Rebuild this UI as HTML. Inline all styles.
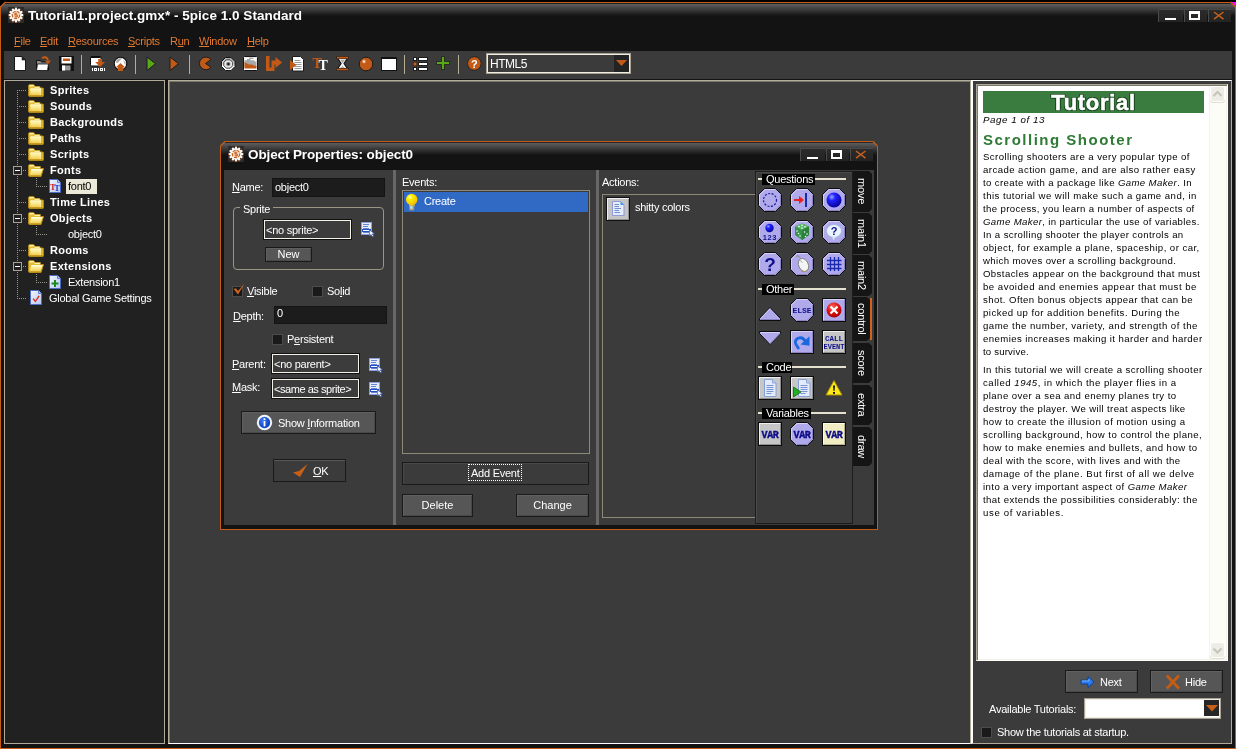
<!DOCTYPE html>
<html><head><meta charset="utf-8"><title>5pice</title>
<style>
*{box-sizing:border-box;margin:0;padding:0}
html,body{width:1236px;height:749px;overflow:hidden;background:#000}
body{font-family:"Liberation Sans",sans-serif;font-size:11px;color:#fff;position:relative}
.a{position:absolute}
.t{position:absolute;white-space:nowrap;line-height:14px;height:14px;letter-spacing:-.25px}
u{text-decoration:underline;text-underline-offset:1px}
#win{position:absolute;left:0;top:2px;width:1236px;height:747px;background:#131313;border:1px solid #c45c16}
.orange{color:#e27a30}
.sep{position:absolute;top:55px;width:1px;height:19px;background:#b4ad96}
.btn{position:absolute;background:#565656;border:1px solid #1a1a1a;box-shadow:inset 1px 1px 0 #606060,inset -1px -1px 0 #484848;text-align:center;color:#fff}
.inp{position:absolute;background:#1c1c1c;border:1px solid #141414}
.fld{position:absolute;background:#3c3c3c;border:1px solid #101010;box-shadow:inset 0 0 0 1px #f4f2e8}
.cb{position:absolute;width:11px;height:11px;background:#1a1a1a;border:1px solid #4c4c4c}
.tr{position:absolute;left:50px;font-weight:bold;letter-spacing:.3px}
.tc{position:absolute;left:68px}
.dh{height:1px;background:repeating-linear-gradient(90deg,#9a9688 0 1px,transparent 1px 2px)}
.dv{width:1px;background:repeating-linear-gradient(180deg,#9a9688 0 1px,transparent 1px 2px)}
.wb{width:23px;height:13px;background:linear-gradient(#2c2c2c,#232323);box-shadow:inset 1px 1px 0 #4a4a4a}
.vt{letter-spacing:-.2px;writing-mode:vertical-rl;text-align:center;line-height:17px;font-size:11px;color:#fff;white-space:nowrap}
.tl{position:absolute;left:983px;white-space:nowrap;font-size:9.6px;line-height:13px;height:13px;color:#000}
.pg{top:113px;font-style:italic;font-size:9.8px}
.hd{top:130px;font-weight:bold;font-size:15px;line-height:20px;height:20px;color:#2f7a35}
.sbb{width:15px;height:16px;background:#eeede5;border:1px solid #fff;border-radius:3px;box-shadow:0 1px 0 #e0dfd2}
</style></head><body>
<div id="root" style="position:absolute;left:0;top:0;width:1236px;height:749px;will-change:transform">
<div id="win"></div>
<!-- corner cuts -->
<!-- title gradient -->
<div class="a" style="left:1px;top:4px;width:1234px;height:12px;background:linear-gradient(#5e5e5e,#131313)"></div>
<div class="a" style="left:1px;top:3px;width:1234px;height:1px;background:#222"></div>
<svg class="a" style="left:0;top:0" width="8" height="10"><polygon points="0,0 8,0 8,2 5,2 0,7" fill="#000"/><path d="M0 7.500 L5.500 2" stroke="#c45c16" stroke-width="1.400" fill="none"/></svg>
<svg class="a" style="left:1228px;top:0" width="8" height="10"><polygon points="0,0 8,0 8,2 0,2" fill="#000"/><polygon points="3,2 8,2 8,7" fill="#ff00ff"/><path d="M2.500 2 L8 7.500" stroke="#c45c16" stroke-width="1.400" fill="none"/></svg>
<div class="a" id="ticon" style="left:8px;top:7px;width:16px;height:16px;background:#2b2b2b"></div><svg class="a" style="left:8px;top:7px" width="16" height="16" viewBox="0 0 16 16"><path d="M7.17 0.85L8.83 0.85L8.88 2.47L10.01 2.77L10.86 1.39L12.29 2.22L11.52 3.65L12.35 4.48L13.78 3.71L14.61 5.14L13.23 5.99L13.53 7.12L15.15 7.17L15.15 8.83L13.53 8.88L13.23 10.01L14.61 10.86L13.78 12.29L12.35 11.52L11.52 12.35L12.29 13.78L10.86 14.61L10.01 13.23L8.88 13.53L8.83 15.15L7.17 15.15L7.12 13.53L5.99 13.23L5.14 14.61L3.71 13.78L4.48 12.35L3.65 11.52L2.22 12.29L1.39 10.86L2.77 10.01L2.47 8.88L0.85 8.83L0.85 7.17L2.47 7.12L2.77 5.99L1.39 5.14L2.22 3.71L3.65 4.48L4.48 3.65L3.71 2.22L5.14 1.39L5.99 2.77L7.12 2.47Z" fill="#fff"/><path d="M7.17 0.85L8.83 0.85L8.88 2.47L10.01 2.77L10.86 1.39L12.29 2.22L11.52 3.65L12.35 4.48L13.78 3.71L14.61 5.14L13.23 5.99L13.53 7.12L15.15 7.17L15.15 8.83L13.53 8.88L13.23 10.01L14.61 10.86L13.78 12.29L12.35 11.52L11.52 12.35L12.29 13.78L10.86 14.61L10.01 13.23L8.88 13.53L8.83 15.15L7.17 15.15L7.12 13.53L5.99 13.23L5.14 14.61L3.71 13.78L4.48 12.35L3.65 11.52L2.22 12.29L1.39 10.86L2.77 10.01L2.47 8.88L0.85 8.83L0.85 7.17L2.47 7.12L2.77 5.99L1.39 5.14L2.22 3.71L3.65 4.48L4.48 3.65L3.71 2.22L5.14 1.39L5.99 2.77L7.12 2.47Z" fill="none" stroke="#c8601a" stroke-width=".9" opacity=".55" transform="translate(0 .6)"/><path d="M7.17 0.85L8.83 0.85L8.88 2.47L10.01 2.77L10.86 1.39L12.29 2.22L11.52 3.65L12.35 4.48L13.78 3.71L14.61 5.14L13.23 5.99L13.53 7.12L15.15 7.17L15.15 8.83L13.53 8.88L13.23 10.01L14.61 10.86L13.78 12.29L12.35 11.52L11.52 12.35L12.29 13.78L10.86 14.61L10.01 13.23L8.88 13.53L8.83 15.15L7.17 15.15L7.12 13.53L5.99 13.23L5.14 14.61L3.71 13.78L4.48 12.35L3.65 11.52L2.22 12.29L1.39 10.86L2.77 10.01L2.47 8.88L0.85 8.83L0.85 7.17L2.47 7.12L2.77 5.99L1.39 5.14L2.22 3.71L3.65 4.48L4.48 3.65L3.71 2.22L5.14 1.39L5.99 2.77L7.12 2.47Z" fill="#fff"/><circle cx="8" cy="8" r="4.400" fill="#fff"/><circle cx="8" cy="8" r="3.700" fill="none" stroke="#c8601a" stroke-width="1.300" stroke-dasharray="3.500 .9"/><circle cx="8" cy="8" r="2.900" fill="#f4d8c4"/><path d="M9.200 6.200h-2.200v1.700h1.300q1.100 0 1.100 1t-1.100 1h-1.500" stroke="#c8601a" stroke-width="1.100" fill="none"/></svg>
<div class="t" id="title" style="left:28px;top:8px;letter-spacing:.03px;font-size:13.5px;font-weight:bold;line-height:16px;height:16px">Tutorial1.project.gmx* - 5pice 1.0 Standard</div>
<div class="a wb" style="left:1158px;top:9px;width:25px"></div><div class="a wb" style="left:1184px;top:9px"></div><div class="a wb" style="left:1208px;top:9px;width:23px"></div>
<div class="a" style="left:1165px;top:18px;width:11px;height:2px;background:#fff"></div>
<div class="a" style="left:1189px;top:11px;width:11px;height:9px;border:2px solid #fff;border-top-width:3px"></div>
<svg class="a" style="left:1213px;top:11px" width="12" height="9"><path d="M1 1L10.500 8.200M10.500 1L1 8.200" stroke="#c8601a" stroke-width="1.500"/></svg>
<!-- menu -->
<div class="t orange" style="left:14px;top:34px"><u>F</u>ile</div>
<div class="t orange" style="left:40px;top:34px"><u>E</u>dit</div>
<div class="t orange" style="left:68px;top:34px"><u>R</u>esources</div>
<div class="t orange" style="left:128px;top:34px"><u>S</u>cripts</div>
<div class="t orange" style="left:170px;top:34px">R<u>u</u>n</div>
<div class="t orange" style="left:199px;top:34px"><u>W</u>indow</div>
<div class="t orange" style="left:247px;top:34px"><u>H</u>elp</div>
<!-- toolbar -->
<div class="a" id="toolbar" style="left:4px;top:51px;width:1228px;height:28px;background:#3b3b3b"></div>
<!-- TB-START -->
<!-- new -->
<svg class="a" style="left:14px;top:56px" width="12" height="15" viewBox="0 0 12 15"><path d="M0.500 0.500H8L11.500 4V14.500H0.500Z" fill="#fff" stroke="#161616"/><path d="M8 0.500V4H11.500Z" fill="#2a2a2a" stroke="#161616" stroke-width=".6"/></svg>
<!-- open -->
<svg class="a" style="left:35px;top:55px" width="17" height="17" viewBox="0 0 17 17"><path d="M1.5 5.5h4l1 1.5h7v8.5h-12z" fill="#8c8c8c" stroke="#111"/><path d="M2.5 9h11l-1 6.5h-11z" fill="#fff" stroke="#111" stroke-width=".8"/><path d="M7 3.2Q11 0.5 13 5" stroke="#c25a17" stroke-width="2" fill="none"/><path d="M10 5.5h6l-3 4z" fill="#c25a17"/></svg>
<!-- save -->
<svg class="a" style="left:59px;top:56px" width="15" height="15" viewBox="0 0 15 15"><rect x="0" y="0" width="15" height="15" fill="#111"/><rect x="2.5" y="1" width="10" height="6.5" fill="#fff"/><rect x="4" y="2.5" width="7" height="2.5" fill="#c25a17"/><rect x="3" y="9.5" width="8.500" height="5" fill="#999"/><rect x="3" y="9.500" width="3" height="5" fill="#fff"/></svg>
<div class="sep" style="left:81px"></div>
<!-- exe -->
<svg class="a" style="left:90px;top:55px" width="17" height="17" viewBox="0 0 17 17"><rect x="0.500" y="1.500" width="10.500" height="9.500" rx="1.200" fill="#fff" stroke="#0e0e0e"/><rect x="1" y="1" width="9.500" height="2" fill="#0e0e0e"/><path d="M8.200 4h3.800v3h3l-4.900 5-4.900-5h3z" fill="#c25a17"/><g fill="#fff" shape-rendering="crispEdges"><rect x="2" y="13" width="1" height="3"/><rect x="4" y="13" width="3" height="3"/><rect x="8" y="13" width="1" height="3"/><rect x="10" y="13" width="3" height="3"/><rect x="14" y="13" width="1" height="3"/></g><g fill="#3b3b3b" shape-rendering="crispEdges"><rect x="5" y="14" width="1" height="1"/><rect x="11" y="14" width="1" height="1"/></g></svg>
<!-- publish -->
<svg class="a" style="left:113px;top:56px" width="16" height="16" viewBox="0 0 16 16"><circle cx="7.500" cy="7.600" r="6.300" fill="#fff" stroke="#0e0e0e" stroke-width="1.100"/><path d="M2.700 6.500Q3.300 2.800 7.500 2.200L9 2.500 4.500 7Z" fill="#a8a8a8"/><path d="M10.300 4.200l2.200 1.800.4 3.500-1.700-2.200z" fill="#b4b4b4"/><path d="M7.500 7L12.300 11.600H10V15H5V11.600H2.700Z" fill="#c25a17"/></svg>
<div class="sep" style="left:135px"></div>
<!-- run -->
<svg class="a" style="left:146px;top:56px" width="11" height="16" viewBox="0 0 11 16"><path d="M1 1L9.500 7.700 1 14.500z" fill="#58a818" stroke="#1c1c1c" stroke-width="1"/></svg>
<svg class="a" style="left:169px;top:56px" width="11" height="16" viewBox="0 0 11 16"><path d="M1 1L9.500 7.700 1 14.500z" fill="#c25a17" stroke="#1c1c1c" stroke-width="1"/></svg>
<div class="sep" style="left:189px"></div>
<!-- sprite -->
<svg class="a" style="left:198px;top:56px" width="15" height="15" viewBox="0 0 15 15"><path d="M7.500 7.500L13 3.500A6.500 6.300 0 1 0 13 11.300z" fill="#c25a17" stroke="#1c1c1c" stroke-width="1"/></svg>
<!-- sound -->
<svg class="a" style="left:221px;top:57px" width="15" height="14" viewBox="0 0 15 14"><defs><linearGradient id="sg" x1="0" y1="0" x2="0" y2="1"><stop offset="0" stop-color="#a8a8a8"/><stop offset=".45" stop-color="#d8d8d8"/><stop offset=".6" stop-color="#fff"/></linearGradient></defs><path d="M4.500 0.500h5.500l4 4v5l-4 4h-5.500l-4-4v-5z" fill="url(#sg)" stroke="#141414"/><path d="M5.300 2.800h3.900l2.500 2.500v3.400l-2.500 2.500h-3.900l-2.500-2.500v-3.400z" fill="#e8e8e8" stroke="#2a2a2a" stroke-width=".9"/><circle cx="7.250" cy="7" r="2.300" fill="#9a9a9a"/><circle cx="7.400" cy="7" r="1.200" fill="#1a1a1a"/></svg>
<!-- background -->
<svg class="a" style="left:243px;top:56px" width="15" height="15" viewBox="0 0 15 15"><rect x="0.500" y="0.500" width="14" height="14" rx="1" fill="#fff" stroke="#141414"/><rect x="1.500" y="1.500" width="12" height="9" fill="#a8a8a8"/><path d="M1.500 1.500h4.500v1.500h-2v1.200h-2.500zM7.500 3h3v-1.500h3v4h-2v-1.200h-4z" fill="#fff"/><path d="M1.500 6L4 7.500 6 8.500H9L11 9.500 13.500 10V12.500H1.500Z" fill="#c25a17"/></svg>
<!-- path -->
<svg class="a" style="left:265px;top:55px" width="18" height="17" viewBox="0 0 18 17"><path d="M1 1h3.500v11.500h2v-7h4v-3.500l6.500 5.500-6.500 5.500v-3.500h-1v6.500h-8.500z" fill="#c25a17"/></svg>
<!-- script -->
<svg class="a" style="left:289px;top:56px" width="16" height="16" viewBox="0 0 16 16"><path d="M3.500 0.500h8l3 3v11.500h-11z" fill="#fff" stroke="#1c1c1c"/><g stroke="#999" stroke-width="1"><path d="M5.500 4.500h6M5.500 6.500h7M5.500 8.500h7M5.500 10.500h7M5.500 12.500h7"/></g><path d="M1 4l6.500 5-6.500 5z" fill="#c25a17"/></svg>
<!-- font -->
<svg class="a" style="left:312px;top:57px" width="17" height="15" viewBox="0 0 17 15"><text x="0.500" y="11" font-family="Liberation Serif" font-weight="bold" font-size="14" fill="#c25a17">T</text><text x="6.500" y="13.200" font-family="Liberation Serif" font-weight="bold" font-size="14" fill="#fff">T</text></svg>
<!-- timeline -->
<svg class="a" style="left:336px;top:56px" width="14" height="16" viewBox="0 0 14 16"><path d="M1.800 2.500h9.500l-3.300 5 3.300 5h-9.500l3.300-5z" fill="#fff" stroke="#161616" stroke-width="1.200"/><path d="M4.300 4h4.500l-2.200 3.200z" fill="#aaa"/><path d="M4.500 12l2-2.500 2.200 2.500z" fill="#bbb"/><rect x="0.800" y="0.500" width="11.500" height="2.400" fill="#c25a17" stroke="#161616" stroke-width=".5"/><rect x="0.800" y="12.200" width="11.500" height="2.400" fill="#c25a17" stroke="#161616" stroke-width=".5"/></svg>
<!-- object -->
<svg class="a" style="left:358px;top:56px" width="16" height="16" viewBox="0 0 16 16"><circle cx="8" cy="8" r="6.800" fill="#c25a17" stroke="#1c1c1c" stroke-width="1"/><circle cx="6" cy="5.500" r="2" fill="#e08a55"/><circle cx="6" cy="5.500" r="1" fill="#fff"/></svg>
<!-- room -->
<svg class="a" style="left:381px;top:57px" width="16" height="14" viewBox="0 0 16 14"><rect x="0" y="0" width="16" height="14" fill="#111"/><rect x="1" y="2" width="14" height="11" fill="#fff"/></svg>
<div class="sep" style="left:404px"></div>
<!-- list -->
<svg class="a" style="left:412px;top:56px" width="17" height="16" viewBox="0 0 17 16"><rect x="0" y="0" width="17" height="16" fill="none"/><g stroke="#1c1c1c" stroke-width="1"><rect x="1.500" y="1.500" width="3" height="3" fill="#fff"/><rect x="1.200" y="6.200" width="3.600" height="3.600" fill="#d0601a" stroke-width=".5"/><rect x="1.500" y="11.500" width="3" height="3" fill="#fff"/><rect x="6.500" y="1.500" width="9" height="3" fill="#fff"/><rect x="6.500" y="6.500" width="9" height="3" fill="#fff"/><rect x="6.500" y="11.500" width="9" height="3" fill="#fff"/></g></svg>
<!-- plus -->
<svg class="a" style="left:436px;top:56px" width="15" height="15" viewBox="0 0 15 15"><path d="M5.500 0.500h3v5h5v3h-5v5h-3v-5h-5v-3h5z" fill="#5aa81a" stroke="#1c1c1c" stroke-width=".8"/></svg>
<div class="sep" style="left:458px"></div>
<!-- help -->
<svg class="a" style="left:467px;top:56px" width="15" height="15" viewBox="0 0 15 15"><circle cx="7.300" cy="7.500" r="6.800" fill="#c25a17" stroke="#1c1c1c" stroke-width=".8"/><text x="7.300" y="11.500" text-anchor="middle" font-family="Liberation Sans" font-weight="bold" font-size="11" fill="#fff">?</text></svg>
<!-- combo -->
<div class="a" style="left:486px;top:53px;width:145px;height:21px;background:#3b3b3b;border:1px solid #a8a392;box-shadow:inset 0 0 0 1px #f0eee4"></div>
<div class="a" style="left:614px;top:55px;width:15px;height:17px;background:#232323"></div>
<svg class="a" style="left:616px;top:60px" width="11" height="7"><path d="M0 0h11l-5.500 6z" fill="#c25a17"/></svg>
<div class="t" style="left:490px;top:56px;font-size:12px;line-height:16px;height:16px;letter-spacing:-.5px">HTML5</div>
<!-- TB-END -->
<!-- tree panel -->
<div class="a" id="tree" style="left:4px;top:80px;width:161px;height:664px;background:#212121;border:1px solid #b0ab98"></div>
<svg width="0" height="0" style="position:absolute"><defs><linearGradient id="fg" x1="0" y1="0" x2="0" y2="1"><stop offset="0" stop-color="#fffbd2"/><stop offset=".5" stop-color="#fbe88a"/><stop offset="1" stop-color="#efcc50"/></linearGradient><linearGradient id="docg" x1="0" y1="0" x2="1" y2="1"><stop offset="0" stop-color="#f6f8ff"/><stop offset="1" stop-color="#b4c4f2"/></linearGradient></defs></svg>
<!-- TREE-START -->
<div class="a dv" style="left:17px;top:90px;height:209px"></div>
<div class="a dv" style="left:36px;top:178px;height:9px"></div>
<div class="a dv" style="left:36px;top:226px;height:9px"></div>
<div class="a dv" style="left:36px;top:274px;height:9px"></div>
<div class="a dh" style="left:19px;top:90px;width:8px"></div>
<svg class="a" style="left:28px;top:84px" width="16" height="13" viewBox="0 0 16 13"><path d="M0.500 2Q0.500 0.500 2 0.500H5.500L7.500 2.500H12V4H14.500Q15.500 4 15.500 5V11.500Q15.500 12.500 14.500 12.500H2Q0.500 12.500 0.500 11Z" fill="#e4bc34" stroke="#b08818" stroke-width="1"/><rect x="1.500" y="1.200" width="4" height="1.300" fill="#fff6c0"/><rect x="6.500" y="2.800" width="5" height="1.200" fill="#fdf0a4"/><rect x="2.300" y="4.300" width="10.700" height="6.800" fill="url(#fg)"/><rect x="13" y="4.500" width="1.800" height="7" fill="#e0b22c"/><rect x="11.600" y="4.500" width="1" height="6.500" fill="#fff4b0" opacity=".7"/><rect x="1.300" y="11" width="13.700" height="1" fill="#c89a1c"/></svg>
<div class="t tr" style="top:83px">Sprites</div>
<div class="a dh" style="left:19px;top:106px;width:8px"></div>
<svg class="a" style="left:28px;top:100px" width="16" height="13" viewBox="0 0 16 13"><path d="M0.500 2Q0.500 0.500 2 0.500H5.500L7.500 2.500H12V4H14.500Q15.500 4 15.500 5V11.500Q15.500 12.500 14.500 12.500H2Q0.500 12.500 0.500 11Z" fill="#e4bc34" stroke="#b08818" stroke-width="1"/><rect x="1.500" y="1.200" width="4" height="1.300" fill="#fff6c0"/><rect x="6.500" y="2.800" width="5" height="1.200" fill="#fdf0a4"/><rect x="2.300" y="4.300" width="10.700" height="6.800" fill="url(#fg)"/><rect x="13" y="4.500" width="1.800" height="7" fill="#e0b22c"/><rect x="11.600" y="4.500" width="1" height="6.500" fill="#fff4b0" opacity=".7"/><rect x="1.300" y="11" width="13.700" height="1" fill="#c89a1c"/></svg>
<div class="t tr" style="top:99px">Sounds</div>
<div class="a dh" style="left:19px;top:122px;width:8px"></div>
<svg class="a" style="left:28px;top:116px" width="16" height="13" viewBox="0 0 16 13"><path d="M0.500 2Q0.500 0.500 2 0.500H5.500L7.500 2.500H12V4H14.500Q15.500 4 15.500 5V11.500Q15.500 12.500 14.500 12.500H2Q0.500 12.500 0.500 11Z" fill="#e4bc34" stroke="#b08818" stroke-width="1"/><rect x="1.500" y="1.200" width="4" height="1.300" fill="#fff6c0"/><rect x="6.500" y="2.800" width="5" height="1.200" fill="#fdf0a4"/><rect x="2.300" y="4.300" width="10.700" height="6.800" fill="url(#fg)"/><rect x="13" y="4.500" width="1.800" height="7" fill="#e0b22c"/><rect x="11.600" y="4.500" width="1" height="6.500" fill="#fff4b0" opacity=".7"/><rect x="1.300" y="11" width="13.700" height="1" fill="#c89a1c"/></svg>
<div class="t tr" style="top:115px">Backgrounds</div>
<div class="a dh" style="left:19px;top:138px;width:8px"></div>
<svg class="a" style="left:28px;top:132px" width="16" height="13" viewBox="0 0 16 13"><path d="M0.500 2Q0.500 0.500 2 0.500H5.500L7.500 2.500H12V4H14.500Q15.500 4 15.500 5V11.500Q15.500 12.500 14.500 12.500H2Q0.500 12.500 0.500 11Z" fill="#e4bc34" stroke="#b08818" stroke-width="1"/><rect x="1.500" y="1.200" width="4" height="1.300" fill="#fff6c0"/><rect x="6.500" y="2.800" width="5" height="1.200" fill="#fdf0a4"/><rect x="2.300" y="4.300" width="10.700" height="6.800" fill="url(#fg)"/><rect x="13" y="4.500" width="1.800" height="7" fill="#e0b22c"/><rect x="11.600" y="4.500" width="1" height="6.500" fill="#fff4b0" opacity=".7"/><rect x="1.300" y="11" width="13.700" height="1" fill="#c89a1c"/></svg>
<div class="t tr" style="top:131px">Paths</div>
<div class="a dh" style="left:19px;top:154px;width:8px"></div>
<svg class="a" style="left:28px;top:148px" width="16" height="13" viewBox="0 0 16 13"><path d="M0.500 2Q0.500 0.500 2 0.500H5.500L7.500 2.500H12V4H14.500Q15.500 4 15.500 5V11.500Q15.500 12.500 14.500 12.500H2Q0.500 12.500 0.500 11Z" fill="#e4bc34" stroke="#b08818" stroke-width="1"/><rect x="1.500" y="1.200" width="4" height="1.300" fill="#fff6c0"/><rect x="6.500" y="2.800" width="5" height="1.200" fill="#fdf0a4"/><rect x="2.300" y="4.300" width="10.700" height="6.800" fill="url(#fg)"/><rect x="13" y="4.500" width="1.800" height="7" fill="#e0b22c"/><rect x="11.600" y="4.500" width="1" height="6.500" fill="#fff4b0" opacity=".7"/><rect x="1.300" y="11" width="13.700" height="1" fill="#c89a1c"/></svg>
<div class="t tr" style="top:147px">Scripts</div>
<div class="a dh" style="left:19px;top:170px;width:8px"></div>
<svg class="a" style="left:28px;top:164px" width="16" height="13" viewBox="0 0 16 13"><path d="M0.500 2Q0.500 0.500 2 0.500H5.500L7.500 2.500H12.500V4.500H15.500L13 12.500H2Q0.500 12.500 0.500 11Z" fill="#e4bc34" stroke="#b08818" stroke-width="1"/><rect x="1.500" y="1.200" width="4" height="1.300" fill="#fff6c0"/><rect x="6.500" y="2.800" width="5.500" height="1.200" fill="#fdf0a4"/><path d="M3.500 5H14.800L12.500 11.500H1.500Z" fill="url(#fg)"/><path d="M3.800 5.500H13" stroke="#fffce0" stroke-width="1"/><rect x="1.300" y="11.200" width="11.500" height="1" fill="#c89a1c"/></svg>
<div class="a" style="left:13px;top:166px;width:9px;height:9px;background:#212121;border:1px solid #a8a392"></div><div class="a" style="left:15px;top:170px;width:5px;height:1px;background:#fff"></div>
<div class="t tr" style="top:163px">Fonts</div>
<div class="a dh" style="left:36px;top:186px;width:12px"></div>
<svg class="a" style="left:49px;top:179px" width="12" height="14" viewBox="0 0 12 14"><path d="M0.500 0.500h8l3 3v10h-11z" fill="url(#docg)" stroke="#4a6cc8"/><path d="M8.500 0.500v3h3" fill="#b8c8f0" stroke="#4a6cc8" stroke-width=".8"/><text x="1" y="10.500" font-family="Liberation Serif" font-weight="bold" font-size="8.500" fill="#d02020">T</text><text x="5.200" y="12" font-family="Liberation Serif" font-weight="bold" font-size="8.500" fill="#2040c0">T</text></svg>
<div class="a" style="left:66px;top:179px;width:31px;height:15px;background:#ece9d8"></div>
<div class="t tc" style="top:179px;color:#000">font0</div>
<div class="a dh" style="left:19px;top:202px;width:8px"></div>
<svg class="a" style="left:28px;top:196px" width="16" height="13" viewBox="0 0 16 13"><path d="M0.500 2Q0.500 0.500 2 0.500H5.500L7.500 2.500H12V4H14.500Q15.500 4 15.500 5V11.500Q15.500 12.500 14.500 12.500H2Q0.500 12.500 0.500 11Z" fill="#e4bc34" stroke="#b08818" stroke-width="1"/><rect x="1.500" y="1.200" width="4" height="1.300" fill="#fff6c0"/><rect x="6.500" y="2.800" width="5" height="1.200" fill="#fdf0a4"/><rect x="2.300" y="4.300" width="10.700" height="6.800" fill="url(#fg)"/><rect x="13" y="4.500" width="1.800" height="7" fill="#e0b22c"/><rect x="11.600" y="4.500" width="1" height="6.500" fill="#fff4b0" opacity=".7"/><rect x="1.300" y="11" width="13.700" height="1" fill="#c89a1c"/></svg>
<div class="t tr" style="top:195px">Time Lines</div>
<div class="a dh" style="left:19px;top:218px;width:8px"></div>
<svg class="a" style="left:28px;top:212px" width="16" height="13" viewBox="0 0 16 13"><path d="M0.500 2Q0.500 0.500 2 0.500H5.500L7.500 2.500H12.500V4.500H15.500L13 12.500H2Q0.500 12.500 0.500 11Z" fill="#e4bc34" stroke="#b08818" stroke-width="1"/><rect x="1.500" y="1.200" width="4" height="1.300" fill="#fff6c0"/><rect x="6.500" y="2.800" width="5.500" height="1.200" fill="#fdf0a4"/><path d="M3.500 5H14.800L12.500 11.500H1.500Z" fill="url(#fg)"/><path d="M3.800 5.500H13" stroke="#fffce0" stroke-width="1"/><rect x="1.300" y="11.200" width="11.500" height="1" fill="#c89a1c"/></svg>
<div class="a" style="left:13px;top:214px;width:9px;height:9px;background:#212121;border:1px solid #a8a392"></div><div class="a" style="left:15px;top:218px;width:5px;height:1px;background:#fff"></div>
<div class="t tr" style="top:211px">Objects</div>
<div class="a dh" style="left:36px;top:234px;width:12px"></div>
<div class="t tc" style="top:227px">object0</div>
<div class="a dh" style="left:19px;top:250px;width:8px"></div>
<svg class="a" style="left:28px;top:244px" width="16" height="13" viewBox="0 0 16 13"><path d="M0.500 2Q0.500 0.500 2 0.500H5.500L7.500 2.500H12V4H14.500Q15.500 4 15.500 5V11.500Q15.500 12.500 14.500 12.500H2Q0.500 12.500 0.500 11Z" fill="#e4bc34" stroke="#b08818" stroke-width="1"/><rect x="1.500" y="1.200" width="4" height="1.300" fill="#fff6c0"/><rect x="6.500" y="2.800" width="5" height="1.200" fill="#fdf0a4"/><rect x="2.300" y="4.300" width="10.700" height="6.800" fill="url(#fg)"/><rect x="13" y="4.500" width="1.800" height="7" fill="#e0b22c"/><rect x="11.600" y="4.500" width="1" height="6.500" fill="#fff4b0" opacity=".7"/><rect x="1.300" y="11" width="13.700" height="1" fill="#c89a1c"/></svg>
<div class="t tr" style="top:243px">Rooms</div>
<div class="a dh" style="left:19px;top:266px;width:8px"></div>
<svg class="a" style="left:28px;top:260px" width="16" height="13" viewBox="0 0 16 13"><path d="M0.500 2Q0.500 0.500 2 0.500H5.500L7.500 2.500H12.500V4.500H15.500L13 12.500H2Q0.500 12.500 0.500 11Z" fill="#e4bc34" stroke="#b08818" stroke-width="1"/><rect x="1.500" y="1.200" width="4" height="1.300" fill="#fff6c0"/><rect x="6.500" y="2.800" width="5.500" height="1.200" fill="#fdf0a4"/><path d="M3.500 5H14.800L12.500 11.500H1.500Z" fill="url(#fg)"/><path d="M3.800 5.500H13" stroke="#fffce0" stroke-width="1"/><rect x="1.300" y="11.200" width="11.500" height="1" fill="#c89a1c"/></svg>
<div class="a" style="left:13px;top:262px;width:9px;height:9px;background:#212121;border:1px solid #a8a392"></div><div class="a" style="left:15px;top:266px;width:5px;height:1px;background:#fff"></div>
<div class="t tr" style="top:259px">Extensions</div>
<div class="a dh" style="left:36px;top:282px;width:12px"></div>
<svg class="a" style="left:49px;top:275px" width="12" height="14" viewBox="0 0 12 14"><path d="M0.500 0.500h8l3 3v10h-11z" fill="url(#docg)" stroke="#4a6cc8"/><path d="M8.500 0.500v3h3" fill="#b8c8f0" stroke="#4a6cc8" stroke-width=".8"/><path d="M5 5h2v2.500h2.500v2h-2.500v2.500h-2v-2.500h-2.500v-2h2.500z" fill="#1a8a1a"/></svg>
<div class="t tc" style="top:275px">Extension1</div>
<div class="a dh" style="left:19px;top:298px;width:8px"></div>
<svg class="a" style="left:29px;top:290px" width="14" height="15" viewBox="0 0 14 15"><path d="M1.500 0.500h8l3 3v11h-11z" fill="url(#docg)" stroke="#4a6cc8"/><path d="M9.500 0.500v3h3" fill="#b8c8f0" stroke="#4a6cc8" stroke-width=".8"/><path d="M3.500 9l1.300-.8 1.500 2.200 3.200-5 1.200.8-4.300 6.300z" fill="#e02818"/></svg>
<div class="t" style="left:49px;top:291px">Global Game Settings</div>
<!-- TREE-END -->
<!-- mdi -->
<div class="a" id="mdi" style="left:168px;top:80px;width:803px;height:664px;background:#3b3b3b;border-left:1px solid #b4af9c;border-top:1px solid #b4af9c;border-right:1px solid #b0ab98;border-bottom:1px solid #fff;box-shadow:inset 1px 1px 0 #7a766a"></div>
<!-- right panel -->
<div class="a" id="rp" style="left:971px;top:80px;width:261px;height:664px;background:#3b3b3b;border-left:2px solid #fff;border-top:1px solid #fff;border-right:1px solid #b0ab98;border-bottom:1px solid #b0ab98"></div>
<!-- TUT-START -->
<div class="a" style="left:976px;top:84px;width:252px;height:577px;background:#fff;border-left:1px solid #aca899;border-top:1px solid #aca899;border-right:1px solid #fff;border-bottom:1px solid #fff;box-shadow:inset 1px 1px 0 #7c796c,inset -1px -1px 0 #f4f2e6"></div>
<div class="a" style="left:983px;top:91px;width:221px;height:22px;background:#3a7c40"></div>
<div class="a" id="tutt" style="left:983px;top:89.5px;width:221px;height:26px;text-align:center;font-weight:bold;font-size:22px;line-height:26px;color:#fff;letter-spacing:.7px;-webkit-text-stroke:.5px #fff;text-shadow:1px 0 0 #1c4a20,-1px 0 0 #1c4a20,0 1px 0 #1c4a20,0 -1px 0 #1c4a20,1px 1px 0 #1c4a20,-1px -1px 0 #1c4a20,1px -1px 0 #1c4a20,-1px 1px 0 #1c4a20">Tutorial</div>
<!-- scrollbar -->
<div class="a" style="left:1209px;top:86px;width:17px;height:573px;background:#fdfdf8;border-left:1px solid #f4f3ea"></div>
<div class="a sbb" style="left:1210px;top:86px"></div>
<svg class="a" style="left:1212px;top:90px" width="11" height="8"><path d="M1.500 6L5.500 2l4 4" stroke="#c6c4ba" stroke-width="2" fill="none"/></svg>
<div class="a sbb" style="left:1210px;top:642px"></div>
<svg class="a" style="left:1212px;top:647px" width="11" height="8"><path d="M1.500 1.500l4 4 4-4" stroke="#c6c4ba" stroke-width="2" fill="none"/></svg>
<div class="tl" style="top:150px;letter-spacing:0.427px">Scrolling shooters are a very popular type of</div>
<div class="tl" style="top:163px;letter-spacing:0.445px">arcade action game, and are also rather easy</div>
<div class="tl" style="top:176px;letter-spacing:0.374px">to create with a package like <i>Game Maker</i>. In</div>
<div class="tl" style="top:189px;letter-spacing:0.464px">this tutorial we will make such a game and, in</div>
<div class="tl" style="top:202px;letter-spacing:0.378px">the process, you learn a number of aspects of</div>
<div class="tl" style="top:215px;letter-spacing:0.380px"><i>Game Maker</i>, in particular the use of variables.</div>
<div class="tl" style="top:228px;letter-spacing:0.393px">In a scrolling shooter the player controls an</div>
<div class="tl" style="top:241px;letter-spacing:0.445px">object, for example a plane, spaceship, or car,</div>
<div class="tl" style="top:254px;letter-spacing:0.377px">which moves over a scrolling background.</div>
<div class="tl" style="top:267px;letter-spacing:0.408px">Obstacles appear on the background that must</div>
<div class="tl" style="top:280px;letter-spacing:0.509px">be avoided and enemies appear that must be</div>
<div class="tl" style="top:293px;letter-spacing:0.424px">shot. Often bonus objects appear that can be</div>
<div class="tl" style="top:306px;letter-spacing:0.465px">picked up for addition benefits. During the</div>
<div class="tl" style="top:319px;letter-spacing:0.487px">game the number, variety, and strength of the</div>
<div class="tl" style="top:332px;letter-spacing:0.422px">enemies increases making it harder and harder</div>
<div class="tl" style="top:345px;letter-spacing:0.187px">to survive.</div>
<div class="tl" style="top:363px;letter-spacing:0.427px">In this tutorial we will create a scrolling shooter</div>
<div class="tl" style="top:376px;letter-spacing:0.509px">called <i>1945</i>, in which the player flies in a</div>
<div class="tl" style="top:389px;letter-spacing:0.438px">plane over a sea and enemy planes try to</div>
<div class="tl" style="top:402px;letter-spacing:0.362px">destroy the player. We will treat aspects like</div>
<div class="tl" style="top:415px;letter-spacing:0.485px">how to create the illusion of motion using a</div>
<div class="tl" style="top:428px;letter-spacing:0.453px">scrolling background, how to control the plane,</div>
<div class="tl" style="top:441px;letter-spacing:0.465px">how to make enemies and bullets, and how to</div>
<div class="tl" style="top:454px;letter-spacing:0.431px">deal with the score, with lives and with the</div>
<div class="tl" style="top:467px;letter-spacing:0.498px">damage of the plane. But first of all we delve</div>
<div class="tl" style="top:480px;letter-spacing:0.423px">into a very important aspect of <i>Game Maker</i></div>
<div class="tl" style="top:493px;letter-spacing:0.405px">that extends the possibilities considerably: the</div>
<div class="tl" style="top:506px;letter-spacing:0.653px">use of variables.</div>
<div class="tl pg" style="letter-spacing:0.531px">Page 1 of 13</div>
<div class="tl hd" style="letter-spacing:1.499px">Scrolling Shooter</div>
<div class="btn" style="left:1065px;top:670px;width:73px;height:23px"></div>
<svg class="a" style="left:1080px;top:676px" width="15" height="12"><path d="M1 4h7v-3.500l6 5.500-6 5.500v-3.500h-7z" fill="#2a7af0" stroke="#0a3a90" stroke-width=".8"/><path d="M2 5h7v-2" stroke="#8ac0ff" fill="none" stroke-width=".8"/></svg>
<div class="t" style="left:1100px;top:675px">Next</div>
<div class="btn" style="left:1150px;top:670px;width:73px;height:23px"></div>
<svg class="a" style="left:1165px;top:674px" width="16" height="16"><path d="M1.800 1.500L14 14.500M14 1.500L1.800 14.500" stroke="#c45c16" stroke-width="2.800"/></svg>
<div class="t" style="left:1185px;top:675px">Hide</div>
<div class="t" style="left:989px;top:702px">Available Tutorials:</div>
<div class="a" style="left:1084px;top:698px;width:137px;height:21px;background:#fff;border:1px solid #a8a392;box-shadow:inset 0 0 0 1px #f0eee4"></div>
<div class="a" style="left:1204px;top:700px;width:15px;height:16px;background:#262626"></div>
<svg class="a" style="left:1206px;top:705px" width="12" height="7"><path d="M0 0h12l-6 6.500z" fill="#c8601a"/></svg>
<div class="cb" style="left:981px;top:727px"></div>
<div class="t" style="left:997px;top:725px">Show the tutorials at startup.</div>
<!-- TUT-END -->
<!-- DLG-START -->
<div class="a" id="dlg" style="left:220px;top:141px;width:658px;height:389px;background:#131313;border:1px solid #c45c16"></div>
<div class="a" style="left:221px;top:143px;width:656px;height:12px;background:linear-gradient(#5e5e5e,#131313)"></div><div class="a" style="left:221px;top:142px;width:656px;height:1px;background:#262626"></div>
<svg class="a" style="left:220px;top:141px" width="7" height="7"><polygon points="0,0 6,0 0,6" fill="#3b3b3b"/><path d="M0 5.500L5.500 0" stroke="#c45c16" stroke-width="1.400" fill="none"/></svg>
<svg class="a" style="left:871px;top:141px" width="7" height="7"><polygon points="7,0 1,0 7,6" fill="#3b3b3b"/><path d="M1.500 0L7 5.500" stroke="#c45c16" stroke-width="1.400" fill="none"/></svg>
<div class="a" style="left:228px;top:146px;width:16px;height:16px;background:#2b2b2b"></div><svg class="a" style="left:228px;top:146px" width="16" height="16" viewBox="0 0 16 16"><path d="M7.17 0.85L8.83 0.85L8.88 2.47L10.01 2.77L10.86 1.39L12.29 2.22L11.52 3.65L12.35 4.48L13.78 3.71L14.61 5.14L13.23 5.99L13.53 7.12L15.15 7.17L15.15 8.83L13.53 8.88L13.23 10.01L14.61 10.86L13.78 12.29L12.35 11.52L11.52 12.35L12.29 13.78L10.86 14.61L10.01 13.23L8.88 13.53L8.83 15.15L7.17 15.15L7.12 13.53L5.99 13.23L5.14 14.61L3.71 13.78L4.48 12.35L3.65 11.52L2.22 12.29L1.39 10.86L2.77 10.01L2.47 8.88L0.85 8.83L0.85 7.17L2.47 7.12L2.77 5.99L1.39 5.14L2.22 3.71L3.65 4.48L4.48 3.65L3.71 2.22L5.14 1.39L5.99 2.77L7.12 2.47Z" fill="#fff"/><path d="M7.17 0.85L8.83 0.85L8.88 2.47L10.01 2.77L10.86 1.39L12.29 2.22L11.52 3.65L12.35 4.48L13.78 3.71L14.61 5.14L13.23 5.99L13.53 7.12L15.15 7.17L15.15 8.83L13.53 8.88L13.23 10.01L14.61 10.86L13.78 12.29L12.35 11.52L11.52 12.35L12.29 13.78L10.86 14.61L10.01 13.23L8.88 13.53L8.83 15.15L7.17 15.15L7.12 13.53L5.99 13.23L5.14 14.61L3.71 13.78L4.48 12.35L3.65 11.52L2.22 12.29L1.39 10.86L2.77 10.01L2.47 8.88L0.85 8.83L0.85 7.17L2.47 7.12L2.77 5.99L1.39 5.14L2.22 3.71L3.65 4.48L4.48 3.65L3.71 2.22L5.14 1.39L5.99 2.77L7.12 2.47Z" fill="none" stroke="#c8601a" stroke-width=".9" opacity=".55" transform="translate(0 .6)"/><path d="M7.17 0.85L8.83 0.85L8.88 2.47L10.01 2.77L10.86 1.39L12.29 2.22L11.52 3.65L12.35 4.48L13.78 3.71L14.61 5.14L13.23 5.99L13.53 7.12L15.15 7.17L15.15 8.83L13.53 8.88L13.23 10.01L14.61 10.86L13.78 12.29L12.35 11.52L11.52 12.35L12.29 13.78L10.86 14.61L10.01 13.23L8.88 13.53L8.83 15.15L7.17 15.15L7.12 13.53L5.99 13.23L5.14 14.61L3.71 13.78L4.48 12.35L3.65 11.52L2.22 12.29L1.39 10.86L2.77 10.01L2.47 8.88L0.85 8.83L0.85 7.17L2.47 7.12L2.77 5.99L1.39 5.14L2.22 3.71L3.65 4.48L4.48 3.65L3.71 2.22L5.14 1.39L5.99 2.77L7.12 2.47Z" fill="#fff"/><circle cx="8" cy="8" r="4.400" fill="#fff"/><circle cx="8" cy="8" r="3.700" fill="none" stroke="#c8601a" stroke-width="1.300" stroke-dasharray="3.500 .9"/><circle cx="8" cy="8" r="2.900" fill="#f4d8c4"/><path d="M9.200 6.200h-2.200v1.700h1.300q1.100 0 1.100 1t-1.100 1h-1.500" stroke="#c8601a" stroke-width="1.100" fill="none"/></svg>
<div class="t" id="dtitle" style="left:248px;top:147px;letter-spacing:-.12px;font-size:13.5px;font-weight:bold;line-height:16px;height:16px">Object Properties: object0</div>
<!-- win buttons -->
<div class="a wb" style="left:800px;top:148px;width:25px"></div><div class="a wb" style="left:826px;top:148px"></div><div class="a wb" style="left:850px;top:148px;width:23px"></div>
<div class="a" style="left:807px;top:157px;width:11px;height:2px;background:#fff"></div>
<div class="a" style="left:831px;top:150px;width:11px;height:9px;border:2px solid #fff;border-top-width:3px"></div>
<svg class="a" style="left:855px;top:150px" width="12" height="9"><path d="M1 1L10.500 8.200M10.500 1L1 8.200" stroke="#c8601a" stroke-width="1.500"/></svg>
<!-- client -->
<div class="a" style="left:224px;top:170px;width:650px;height:355px;background:#3b3b3b"></div>
<div class="a" style="left:393px;top:170px;width:3px;height:355px;background:#686868"></div>
<div class="a" style="left:596px;top:170px;width:3px;height:355px;background:#686868"></div>
<!-- left pane -->
<div class="t" style="left:232px;top:180px"><u>N</u>ame:</div>
<div class="inp" style="left:272px;top:178px;width:113px;height:19px"></div>
<div class="t" style="left:275px;top:180px">object0</div>
<div class="a" style="left:233px;top:207px;width:151px;height:63px;border:1px solid #9a9584;border-radius:4px"></div>
<div class="a" style="left:240px;top:204px;width:33px;height:10px;background:#3b3b3b"></div>
<div class="t" style="left:243px;top:202px">Sprite</div>
<div class="fld" style="left:263px;top:219px;width:89px;height:21px"></div>
<div class="t" style="left:266px;top:223px">&lt;no sprite&gt;</div>
<div class="btn" style="left:265px;top:247px;width:47px;height:15px;line-height:12px">New</div>
<!-- checkboxes -->
<div class="cb" style="left:232px;top:286px"></div>
<svg class="a" style="left:233px;top:282px" width="14" height="14"><path d="M0.500 6.800L3.200 6.600 5 9 11.800 1.200 5 12.500z" fill="#d0641c"/></svg>
<div class="t" style="left:247px;top:284px"><u>V</u>isible</div>
<div class="cb" style="left:312px;top:286px"></div>
<div class="t" style="left:327px;top:284px">So<u>l</u>id</div>
<div class="t" style="left:233px;top:309px"><u>D</u>epth:</div>
<div class="inp" style="left:274px;top:306px;width:113px;height:18px"></div>
<div class="t" style="left:277px;top:306px">0</div>
<div class="cb" style="left:272px;top:334px"></div>
<div class="t" style="left:287px;top:332px">P<u>e</u>rsistent</div>
<div class="t" style="left:232px;top:357px"><u>P</u>arent:</div>
<div class="fld" style="left:271px;top:353px;width:89px;height:21px"></div>
<div class="t" style="left:274px;top:357px">&lt;no parent&gt;</div>
<div class="t" style="left:232px;top:380px"><u>M</u>ask:</div>
<div class="fld" style="left:271px;top:378px;width:89px;height:21px"></div>
<div class="t" style="left:274px;top:382px;letter-spacing:-.45px">&lt;same as sprite&gt;</div>
<div class="btn" style="left:241px;top:411px;width:135px;height:23px"></div>
<div class="t" style="left:278px;top:416px">Show <u>I</u>nformation</div>
<div class="btn" style="left:273px;top:459px;width:73px;height:23px;background:#3b3b3b;box-shadow:inset 0 1px 0 #585858"></div>
<svg class="a" style="left:292px;top:463px" width="17" height="15"><path d="M1 9.500L7 8 15.500 1 8 14z" fill="#c8601a"/></svg>
<div class="t" style="left:313px;top:464px"><u>O</u>K</div>
<!-- events -->
<div class="t" style="left:402px;top:175px">Events:</div>
<div class="a" style="left:402px;top:190px;width:188px;height:264px;border:1px solid #8e8a7a;background:#3b3b3b"></div>
<div class="a" style="left:404px;top:192px;width:184px;height:20px;background:#316ac5"></div>
<div class="t" style="left:424px;top:194px">Create</div>
<div class="a" style="left:402px;top:462px;width:187px;height:23px;background:#3b3b3b;border:1px solid #1a1a1a;box-shadow:inset 1px 1px 0 #484848"></div>
<div class="a" style="left:468px;top:464px;width:54px;height:17px;border:1px dotted #fff"></div>
<div class="t" style="left:471px;top:466px">Add Event</div>
<div class="btn" style="left:402px;top:494px;width:71px;height:23px;line-height:20px">Delete</div>
<div class="btn" style="left:516px;top:494px;width:73px;height:23px;line-height:20px">Change</div>
<!-- actions -->
<div class="t" style="left:602px;top:175px">Actions:</div>
<div class="a" style="left:602px;top:194px;width:154px;height:324px;border:1px solid #8e8a7a;border-right:none;background:#3b3b3b"></div>
<div class="a" style="left:606px;top:197px;width:24px;height:24px;background:#c4c4c4;border:1px solid #111;box-shadow:inset 1px 1px 0 #f0f0f0,inset -1px -1px 0 #909090"></div>
<div class="t" style="left:635px;top:200px">shitty colors</div>
<svg class="a" style="left:361px;top:222px" width="14" height="15" viewBox="0 0 14 15"><rect x="0.500" y="0.500" width="10" height="12" fill="#e6eefc" stroke="#8a9ee4"/><path d="M2 2.500h6M2 4.500h5M2 6.500h6M2 10.500h6" stroke="#6a86d0" stroke-width="1"/><rect x="1.500" y="7.500" width="8" height="2" fill="#fff" stroke="#2050c0"/><path d="M8.500 8l0 6 1.600-1.500 1.400 2.300 1.200-.7-1.400-2.200 2.200-.2z" fill="#fff" stroke="#3a5ab8" stroke-width=".7"/></svg><svg class="a" style="left:369px;top:358px" width="14" height="15" viewBox="0 0 14 15"><rect x="0.500" y="0.500" width="10" height="12" fill="#e6eefc" stroke="#8a9ee4"/><path d="M2 2.500h6M2 4.500h5M2 6.500h6M2 10.500h6" stroke="#6a86d0" stroke-width="1"/><rect x="1.500" y="7.500" width="8" height="2" fill="#fff" stroke="#2050c0"/><path d="M8.500 8l0 6 1.600-1.500 1.400 2.300 1.200-.7-1.400-2.200 2.200-.2z" fill="#fff" stroke="#3a5ab8" stroke-width=".7"/></svg><svg class="a" style="left:369px;top:382px" width="14" height="15" viewBox="0 0 14 15"><rect x="0.500" y="0.500" width="10" height="12" fill="#e6eefc" stroke="#8a9ee4"/><path d="M2 2.500h6M2 4.500h5M2 6.500h6M2 10.500h6" stroke="#6a86d0" stroke-width="1"/><rect x="1.500" y="7.500" width="8" height="2" fill="#fff" stroke="#2050c0"/><path d="M8.500 8l0 6 1.600-1.500 1.400 2.300 1.200-.7-1.400-2.200 2.200-.2z" fill="#fff" stroke="#3a5ab8" stroke-width=".7"/></svg><svg class="a" style="left:405px;top:193px" width="14" height="18" viewBox="0 0 14 18"><defs><radialGradient id="yb" cx=".35" cy=".3" r=".75"><stop offset="0" stop-color="#fffff0"/><stop offset=".25" stop-color="#fff200"/><stop offset="1" stop-color="#f0b800"/></radialGradient></defs><path d="M4 10.500h5.500v3h-5.500z" fill="#f4c010"/><circle cx="6.700" cy="6.500" r="5.700" fill="url(#yb)"/><rect x="4.200" y="12.500" width="5" height="4" fill="#9a9a70"/><rect x="5.200" y="12.800" width="2.400" height="3" fill="#b8dcf4"/><rect x="4.600" y="16.300" width="4.200" height="1" fill="#d8b040"/></svg><svg class="a" style="left:256px;top:414px" width="17" height="17" viewBox="0 0 17 17"><defs><radialGradient id="ib" cx=".35" cy=".3" r=".8"><stop offset="0" stop-color="#3a7af0"/><stop offset="1" stop-color="#0838b8"/></radialGradient></defs><circle cx="8.500" cy="8.500" r="7.700" fill="#f4f8ff"/><circle cx="8.500" cy="8.500" r="5.700" fill="url(#ib)"/><rect x="7.600" y="4.300" width="1.800" height="1.800" fill="#fff"/><rect x="7.600" y="7" width="1.800" height="5.400" fill="#fff"/></svg><svg class="a" style="left:612px;top:200px" width="13" height="17" viewBox="0 0 13 17"><path d="M0.500 1.500h8l3.500 3.500v10.500h-11.500z" fill="#e2ecfc" stroke="#8a92d8" stroke-width=".9"/><path d="M8.500 1.500v3.500h3.500z" fill="#3a9af0"/><g stroke="#6a86c8" stroke-width=".9"><path d="M2.500 4.500h4.500M2.500 6.500h4.500M2.500 8.500h6.500M2.500 10.500h4.500M2.500 12.500h5.500"/></g></svg>
<!-- palette -->
<div class="a" style="left:755px;top:171px;width:98px;height:353px;background:#3b3b3b;border:1px solid #1c1c1c;box-shadow:inset 1px 1px 0 #4a4a4a"></div>
<!-- PAL-START -->
<div class="a" style="left:758px;top:178px;width:88px;height:2px;background:#e6e2cf"></div>
<div class="a" style="left:762px;top:174px;width:53px;height:11px;background:#000"></div>
<div class="t" style="left:766px;top:172px">Questions</div>
<svg class="a" style="left:758px;top:188px" width="24" height="24" viewBox="0 0 24 24"><path d="M6.500 0.500h11l6 6v11l-6 6h-11l-6-6v-11z" fill="#b0a9ea" stroke="#0c0c0c"/><path d="M1.500 17V7L7 1.500h10" stroke="#d6d2fa" fill="none"/><path d="M22.500 7v10l-5.500 5.500h-10" stroke="#8a84c4" fill="none"/><circle cx="12" cy="12" r="6.500" fill="none" stroke="#1a1a9a" stroke-width="1.200" stroke-dasharray="2 1.500"/></svg>
<svg class="a" style="left:790px;top:188px" width="24" height="24" viewBox="0 0 24 24"><path d="M6.500 0.500h11l6 6v11l-6 6h-11l-6-6v-11z" fill="#b0a9ea" stroke="#0c0c0c"/><path d="M1.500 17V7L7 1.500h10" stroke="#d6d2fa" fill="none"/><path d="M22.500 7v10l-5.500 5.500h-10" stroke="#8a84c4" fill="none"/><rect x="15" y="5" width="2" height="14" fill="#1a2ab0"/><path d="M4 11h5v-3l5 4-5 4v-3h-5z" fill="#e82020"/></svg>
<svg class="a" style="left:822px;top:188px" width="24" height="24" viewBox="0 0 24 24"><path d="M6.500 0.500h11l6 6v11l-6 6h-11l-6-6v-11z" fill="#b0a9ea" stroke="#0c0c0c"/><path d="M1.500 17V7L7 1.500h10" stroke="#d6d2fa" fill="none"/><path d="M22.500 7v10l-5.500 5.500h-10" stroke="#8a84c4" fill="none"/><defs><radialGradient id="bg1" cx=".35" cy=".3" r=".8"><stop offset="0" stop-color="#9aa8ff"/><stop offset=".3" stop-color="#2222ff"/><stop offset="1" stop-color="#000088"/></radialGradient></defs><circle cx="12" cy="12" r="7.500" fill="url(#bg1)"/></svg>
<svg class="a" style="left:758px;top:220px" width="24" height="24" viewBox="0 0 24 24"><path d="M6.500 0.500h11l6 6v11l-6 6h-11l-6-6v-11z" fill="#b0a9ea" stroke="#0c0c0c"/><path d="M1.500 17V7L7 1.500h10" stroke="#d6d2fa" fill="none"/><path d="M22.500 7v10l-5.500 5.500h-10" stroke="#8a84c4" fill="none"/><circle cx="11.500" cy="8" r="4.200" fill="url(#bg1)"/><text x="12" y="19.500" text-anchor="middle" font-family="Liberation Sans" font-size="7.500" font-weight="bold" fill="#10108c" letter-spacing=".6">123</text></svg>
<svg class="a" style="left:790px;top:220px" width="24" height="24" viewBox="0 0 24 24"><path d="M6.500 0.500h11l6 6v11l-6 6h-11l-6-6v-11z" fill="#b0a9ea" stroke="#0c0c0c"/><path d="M1.500 17V7L7 1.500h10" stroke="#d6d2fa" fill="none"/><path d="M22.500 7v10l-5.500 5.500h-10" stroke="#8a84c4" fill="none"/><path d="M12 3.500l7 3v8.500l-7 5-7-5v-8.500z" fill="#35924a"/><path d="M12 3.500l7 3-7 3.500-7-3.500z" fill="#5ab868"/><path d="M12 10v10l7-5v-8.500z" fill="#28803a"/><g fill="#fff"><circle cx="9" cy="6.500" r=".8"/><circle cx="12" cy="5.200" r=".8"/><circle cx="15" cy="6.800" r=".8"/><circle cx="12" cy="8" r=".8"/><circle cx="7" cy="11" r=".8"/><circle cx="10" cy="16" r=".8"/><circle cx="8.500" cy="13.500" r=".8"/><circle cx="14.500" cy="12" r=".8"/><circle cx="17" cy="14" r=".8"/><circle cx="15.500" cy="16.500" r=".8"/></g></svg>
<svg class="a" style="left:822px;top:220px" width="24" height="24" viewBox="0 0 24 24"><path d="M6.500 0.500h11l6 6v11l-6 6h-11l-6-6v-11z" fill="#b0a9ea" stroke="#0c0c0c"/><path d="M1.500 17V7L7 1.500h10" stroke="#d6d2fa" fill="none"/><path d="M22.500 7v10l-5.500 5.500h-10" stroke="#8a84c4" fill="none"/><ellipse cx="12" cy="11" rx="7.500" ry="6.500" fill="#eaf4ff" stroke="#9ab8d8" stroke-width=".8"/><path d="M10 16.500l1.500 4 2.500-4z" fill="#d4e6f8"/><text x="12" y="15" text-anchor="middle" font-family="Liberation Sans" font-size="11" font-weight="bold" fill="#10108c">?</text></svg>
<svg class="a" style="left:758px;top:252px" width="24" height="24" viewBox="0 0 24 24"><path d="M6.500 0.500h11l6 6v11l-6 6h-11l-6-6v-11z" fill="#b0a9ea" stroke="#0c0c0c"/><path d="M1.500 17V7L7 1.500h10" stroke="#d6d2fa" fill="none"/><path d="M22.500 7v10l-5.500 5.500h-10" stroke="#8a84c4" fill="none"/><text x="12" y="19" text-anchor="middle" font-family="Liberation Sans" font-size="19" font-weight="bold" fill="#10108c">?</text></svg>
<svg class="a" style="left:790px;top:252px" width="24" height="24" viewBox="0 0 24 24"><path d="M6.500 0.500h11l6 6v11l-6 6h-11l-6-6v-11z" fill="#b0a9ea" stroke="#0c0c0c"/><path d="M1.500 17V7L7 1.500h10" stroke="#d6d2fa" fill="none"/><path d="M22.500 7v10l-5.500 5.500h-10" stroke="#8a84c4" fill="none"/><path d="M6 4.500q1-1.500 3 0l1.500 2" stroke="#888" fill="none"/><ellipse cx="13.500" cy="13" rx="4.800" ry="6.800" transform="rotate(-25 13.500 13)" fill="#f4f4f4" stroke="#777" stroke-width=".8"/><path d="M9 7.500l3.500 3" stroke="#999" stroke-width=".8"/><path d="M11 18.500q4 3 7-1" stroke="#a89868" stroke-width="1.200" fill="none"/></svg>
<svg class="a" style="left:822px;top:252px" width="24" height="24" viewBox="0 0 24 24"><path d="M6.500 0.500h11l6 6v11l-6 6h-11l-6-6v-11z" fill="#b0a9ea" stroke="#0c0c0c"/><path d="M1.500 17V7L7 1.500h10" stroke="#d6d2fa" fill="none"/><path d="M22.500 7v10l-5.500 5.500h-10" stroke="#8a84c4" fill="none"/><g stroke="#1a2ab0" stroke-width="1.300"><path d="M8.500 5v14M12.500 5v14M16.500 5v14M5 8.500h14.500M5 12.500h14.500M5 16.500h14.500"/></g></svg>
<div class="a" style="left:758px;top:288px;width:88px;height:2px;background:#e6e2cf"></div>
<div class="a" style="left:762px;top:284px;width:32px;height:11px;background:#000"></div>
<div class="t" style="left:766px;top:282px">Other</div>
<svg class="a" style="left:758px;top:298px" width="24" height="24" viewBox="0 0 24 24"><path d="M1.500 22.500v-2L12 9.500l10.500 11v2z" fill="#b0a9ea" stroke="#0c0c0c"/><path d="M2.500 20.500L12 10.700" stroke="#d6d2fa" fill="none"/><path d="M2.500 21.500h19" stroke="#8a84c4" fill="none"/></svg>
<svg class="a" style="left:790px;top:298px" width="24" height="24" viewBox="0 0 24 24"><path d="M6.500 0.500h11l6 6v11l-6 6h-11l-6-6v-11z" fill="#b0a9ea" stroke="#0c0c0c"/><path d="M1.500 17V7L7 1.500h10" stroke="#d6d2fa" fill="none"/><path d="M22.500 7v10l-5.500 5.500h-10" stroke="#8a84c4" fill="none"/><text x="12" y="15" text-anchor="middle" font-family="Liberation Mono" font-size="8" font-weight="bold" fill="#10108c">ELSE</text></svg>
<svg class="a" style="left:822px;top:298px" width="24" height="24" viewBox="0 0 24 24"><rect x="0.500" y="0.500" width="23" height="23" fill="#b0a9ea" stroke="#0c0c0c"/><path d="M1.500 22.500V1.500h21" stroke="#d6d2fa" fill="none"/><path d="M22.500 1.500v21h-21" stroke="#8a84c4" fill="none"/><defs><radialGradient id="rg1" cx=".4" cy=".3" r=".8"><stop offset="0" stop-color="#ff6a5a"/><stop offset=".5" stop-color="#e01010"/><stop offset="1" stop-color="#900000"/></radialGradient></defs><circle cx="12" cy="12" r="7.500" fill="url(#rg1)"/><path d="M8.500 8.500l7 7M15.500 8.500l-7 7" stroke="#fff" stroke-width="2.200"/></svg>
<svg class="a" style="left:758px;top:330px" width="24" height="24" viewBox="0 0 24 24"><path d="M1.500 1.500v2L12 14.500l10.500-11v-2z" fill="#b0a9ea" stroke="#0c0c0c"/><path d="M2.500 2.500h19" stroke="#d6d2fa" fill="none"/><path d="M21.500 4L12 13.800" stroke="#8a84c4" fill="none"/></svg>
<svg class="a" style="left:790px;top:330px" width="24" height="24" viewBox="0 0 24 24"><rect x="0.500" y="0.500" width="23" height="23" fill="#b0a9ea" stroke="#0c0c0c"/><path d="M1.500 22.500V1.500h21" stroke="#d6d2fa" fill="none"/><path d="M22.500 1.500v21h-21" stroke="#8a84c4" fill="none"/><path d="M8.300 18Q2.500 11.500 8 8.300Q12.500 6.300 15.500 11.500" stroke="#1868e0" stroke-width="2.800" fill="none" stroke-linecap="round"/><path d="M19.500 6.200v9.500l-9-1.200z" fill="#1868e0"/></svg>
<svg class="a" style="left:822px;top:330px" width="24" height="24" viewBox="0 0 24 24"><rect x="0.500" y="0.500" width="23" height="23" fill="#c6c6c6" stroke="#0c0c0c"/><path d="M1.500 22.500V1.500h21" stroke="#efefef" fill="none"/><path d="M22.500 1.500v21h-21" stroke="#8e8e8e" fill="none"/><text x="12" y="11" text-anchor="middle" font-family="Liberation Mono" font-size="7.500" font-weight="bold" fill="#10108c">CALL</text><text x="12" y="19" text-anchor="middle" font-family="Liberation Mono" font-size="7" font-weight="bold" fill="#10108c">EVENT</text></svg>
<div class="a" style="left:758px;top:366px;width:88px;height:2px;background:#e6e2cf"></div>
<div class="a" style="left:762px;top:362px;width:30px;height:11px;background:#000"></div>
<div class="t" style="left:766px;top:360px">Code</div>
<svg class="a" style="left:758px;top:376px" width="24" height="24" viewBox="0 0 24 24"><rect x="0.500" y="0.500" width="23" height="23" fill="#c6c6c6" stroke="#0c0c0c"/><path d="M1.500 22.500V1.500h21" stroke="#efefef" fill="none"/><path d="M22.500 1.500v21h-21" stroke="#8e8e8e" fill="none"/><path d="M6.500 3.500h8l3.500 3.500v13.500h-11.500z" fill="#e4ecfc" stroke="#7a9ad8" stroke-width=".9"/><path d="M14.500 3.500v3.500h3.500" fill="#c4d4f4" stroke="#7a9ad8" stroke-width=".8"/><g stroke="#6a8ad0" stroke-width=".9"><path d="M8.500 9.500h7M8.500 11.500h7M8.500 13.500h7M8.500 15.500h7M8.500 17.500h5"/></g></svg>
<svg class="a" style="left:790px;top:376px" width="24" height="24" viewBox="0 0 24 24"><rect x="0.500" y="0.500" width="23" height="23" fill="#c6c6c6" stroke="#0c0c0c"/><path d="M1.500 22.500V1.500h21" stroke="#efefef" fill="none"/><path d="M22.500 1.500v21h-21" stroke="#8e8e8e" fill="none"/><g transform="translate(2 0)"><path d="M6.500 3.500h8l3.500 3.500v13.500h-11.500z" fill="#e4ecfc" stroke="#7a9ad8" stroke-width=".9"/><path d="M14.500 3.500v3.500h3.500" fill="#c4d4f4" stroke="#7a9ad8" stroke-width=".8"/><g stroke="#6a8ad0" stroke-width=".9"><path d="M8.500 9.500h7M8.500 11.500h7M8.500 13.500h7M8.500 15.500h7M8.500 17.500h5"/></g></g><path d="M3.500 11l7.500 5-7.500 5z" fill="#22b022" stroke="#106010" stroke-width=".8"/></svg>
<svg class="a" style="left:822px;top:376px" width="24" height="24" viewBox="0 0 24 24"><path d="M12 4.500l8 14.500h-16z" fill="#ffe81a" stroke="#a89000" stroke-width="1"/><path d="M11 9.500h2l-.5 5.500h-1z" fill="#111"/><rect x="11" y="16" width="2" height="1.800" fill="#111"/></svg>
<div class="a" style="left:758px;top:412px;width:88px;height:2px;background:#e6e2cf"></div>
<div class="a" style="left:762px;top:408px;width:49px;height:11px;background:#000"></div>
<div class="t" style="left:766px;top:406px">Variables</div>
<svg class="a" style="left:758px;top:422px" width="24" height="24" viewBox="0 0 24 24"><rect x="0.500" y="0.500" width="23" height="23" fill="#c6c6c6" stroke="#0c0c0c"/><path d="M1.500 22.500V1.500h21" stroke="#efefef" fill="none"/><path d="M22.500 1.500v21h-21" stroke="#8e8e8e" fill="none"/><text x="12" y="15.500" text-anchor="middle" font-family="Liberation Mono" font-size="10" font-weight="bold" fill="#0c0c88" stroke="#0c0c88" stroke-width=".35" letter-spacing="-.3">VAR</text></svg>
<svg class="a" style="left:790px;top:422px" width="24" height="24" viewBox="0 0 24 24"><path d="M6.500 0.500h11l6 6v11l-6 6h-11l-6-6v-11z" fill="#b0a9ea" stroke="#0c0c0c"/><path d="M1.500 17V7L7 1.500h10" stroke="#d6d2fa" fill="none"/><path d="M22.500 7v10l-5.500 5.500h-10" stroke="#8a84c4" fill="none"/><text x="12" y="15.500" text-anchor="middle" font-family="Liberation Mono" font-size="10" font-weight="bold" fill="#0c0c88" stroke="#0c0c88" stroke-width=".35" letter-spacing="-.3">VAR</text></svg>
<svg class="a" style="left:822px;top:422px" width="24" height="24" viewBox="0 0 24 24"><rect x="0.500" y="0.500" width="23" height="23" fill="#f1ecc4" stroke="#0c0c0c"/><path d="M1.500 22.500V1.500h21" stroke="#fffbe4" fill="none"/><path d="M22.500 1.500v21h-21" stroke="#b8b490" fill="none"/><text x="12" y="15.500" text-anchor="middle" font-family="Liberation Mono" font-size="10" font-weight="bold" fill="#0c0c88" stroke="#0c0c88" stroke-width=".35" letter-spacing="-.3">VAR</text></svg>
<svg class="a" style="left:853px;top:171px" width="21" height="41"><path d="M0 0h16 l3 3v35l-3 3h-16z" fill="#151515"/></svg>
<div class="a vt" style="left:853px;top:171px;width:17px;height:41px">move</div>
<svg class="a" style="left:853px;top:213px" width="21" height="41"><path d="M0 0h16 l3 3v35l-3 3h-16z" fill="#151515"/></svg>
<div class="a vt" style="left:853px;top:213px;width:17px;height:41px">main1</div>
<svg class="a" style="left:853px;top:255px" width="21" height="41"><path d="M0 0h16 l3 3v35l-3 3h-16z" fill="#151515"/></svg>
<div class="a vt" style="left:853px;top:255px;width:17px;height:41px">main2</div>
<svg class="a" style="left:853px;top:297px" width="21" height="44"><path d="M0 0h14 l3 3v38l-3 3h-14z" fill="#151515"/><rect x="17" y="1" width="2" height="42" fill="#d0641c"/></svg>
<div class="a vt" style="left:853px;top:297px;width:17px;height:44px">control</div>
<svg class="a" style="left:853px;top:343px" width="21" height="40"><path d="M0 0h16 l3 3v34l-3 3h-16z" fill="#151515"/></svg>
<div class="a vt" style="left:853px;top:343px;width:17px;height:40px">score</div>
<svg class="a" style="left:853px;top:385px" width="21" height="40"><path d="M0 0h16 l3 3v34l-3 3h-16z" fill="#151515"/></svg>
<div class="a vt" style="left:853px;top:385px;width:17px;height:40px">extra</div>
<svg class="a" style="left:853px;top:427px" width="21" height="39"><path d="M0 0h16 l3 3v33l-3 3h-16z" fill="#151515"/></svg>
<div class="a vt" style="left:853px;top:427px;width:17px;height:39px">draw</div>
<!-- PAL-END -->
<!-- DLG-END -->
</div>
</body></html>
